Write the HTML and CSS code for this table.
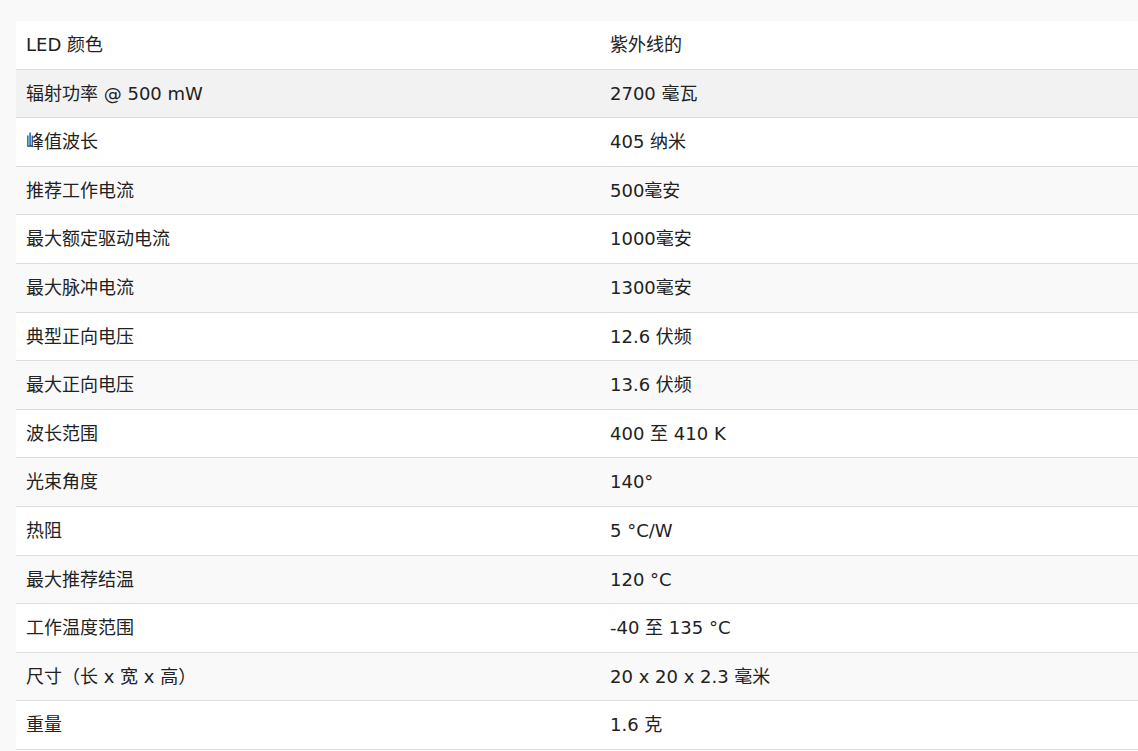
FILE: index.html
```html
<!DOCTYPE html>
<html lang="zh">
<head>
<meta charset="utf-8">
<title>规格</title>
<link rel="stylesheet" href="styles.css">
</head>
<body>
<table class="spec">
  <tbody>
    <tr><td class="k">LED 颜色</td><td>紫外线的</td></tr>
    <tr class="hover"><td class="k">辐射功率 @ 500 mW</td><td>2700 毫瓦</td></tr>
    <tr><td class="k">峰值波长</td><td>405 纳米</td></tr>
    <tr><td class="k">推荐工作电流</td><td>500毫安</td></tr>
    <tr><td class="k">最大额定驱动电流</td><td>1000毫安</td></tr>
    <tr><td class="k">最大脉冲电流</td><td>1300毫安</td></tr>
    <tr><td class="k">典型正向电压</td><td>12.6 伏频</td></tr>
    <tr><td class="k">最大正向电压</td><td>13.6 伏频</td></tr>
    <tr><td class="k">波长范围</td><td>400 至 410 K</td></tr>
    <tr><td class="k">光束角度</td><td>140°</td></tr>
    <tr><td class="k">热阻</td><td>5 °C/W</td></tr>
    <tr><td class="k">最大推荐结温</td><td>120 °C</td></tr>
    <tr><td class="k">工作温度范围</td><td>-40 至 135 °C</td></tr>
    <tr><td class="k">尺寸（长 x 宽 x 高）</td><td>20 x 20 x 2.3 毫米</td></tr>
    <tr><td class="k">重量</td><td>1.6 克</td></tr>
  </tbody>
</table>
</body>
</html>
```
FILE: styles.css
```css
html, body {
  margin: 0;
  background: #f9f9f9;
  overflow: hidden;
}
body {
  padding: 21px 0 0 16px;
  font-family: "DejaVu Sans", "Noto Sans CJK SC", sans-serif;
  font-size: 18px;
  color: #222;
}
.spec {
  width: 100%;
  border-collapse: collapse;
  table-layout: fixed;
}
.spec td {
  padding: 12px 10px;
  line-height: 23.6px;
  border-bottom: 1px solid #dddddd;
  white-space: nowrap;
}
.spec td.k {
  width: 564px;
}
.spec tr:nth-child(odd) {
  background: #ffffff;
}
.spec tr:nth-child(even) {
  background: #f9f9f9;
}
.spec tr.hover {
  background: #f2f2f2;
}
```
